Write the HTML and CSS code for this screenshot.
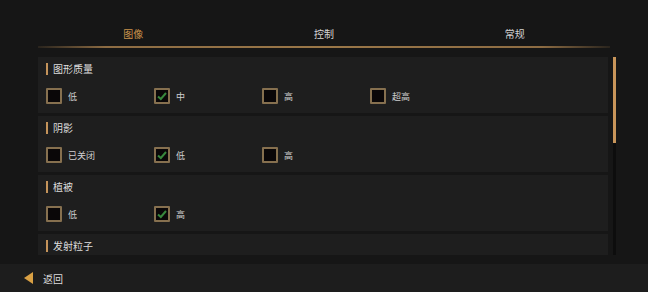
FILE: index.html
```html
<!DOCTYPE html>
<html lang="zh">
<head>
<meta charset="utf-8">
<link rel="stylesheet" href="styles.css">
</head>
<body>
<div class="page">
  <div class="tabs">
    <div class="tab active">图像</div>
    <div class="tab">控制</div>
    <div class="tab">常规</div>
  </div>
  <div class="content">
    <div class="list">
      <div class="section">
        <div class="title">图形质量</div>
        <div class="options">
          <div class="opt"><span class="box"></span><span class="lbl">低</span></div>
          <div class="opt"><span class="box checked"><svg viewBox="0 0 12 12"><path d="M2 6.5 L4.8 9 L10 3" /></svg></span><span class="lbl">中</span></div>
          <div class="opt"><span class="box"></span><span class="lbl">高</span></div>
          <div class="opt"><span class="box"></span><span class="lbl">超高</span></div>
        </div>
      </div>
      <div class="section">
        <div class="title">阴影</div>
        <div class="options">
          <div class="opt"><span class="box"></span><span class="lbl">已关闭</span></div>
          <div class="opt"><span class="box checked"><svg viewBox="0 0 12 12"><path d="M2 6.5 L4.8 9 L10 3" /></svg></span><span class="lbl">低</span></div>
          <div class="opt"><span class="box"></span><span class="lbl">高</span></div>
        </div>
      </div>
      <div class="section">
        <div class="title">植被</div>
        <div class="options">
          <div class="opt"><span class="box"></span><span class="lbl">低</span></div>
          <div class="opt"><span class="box checked"><svg viewBox="0 0 12 12"><path d="M2 6.5 L4.8 9 L10 3" /></svg></span><span class="lbl">高</span></div>
        </div>
      </div>
      <div class="section">
        <div class="title">发射粒子</div>
      </div>
    </div>
    <div class="scrollbar"><div class="thumb"></div></div>
  </div>
  <div class="footer">
    <span class="back-arrow"></span>
    <span class="back-text">返回</span>
  </div>
</div>
</body>
</html>
```
FILE: styles.css
```css
html, body {
  margin: 0;
  padding: 0;
  background: #161616;
}
body {
  width: 648px;
  height: 292px;
  overflow: hidden;
  font-family: "Noto Sans CJK SC", "Noto Sans", sans-serif;
  color: #d6d6d6;
}
.page {
  display: flex;
  flex-direction: column;
  height: 292px;
}
.tabs {
  display: flex;
  margin: 0 38px;
  height: 48px;
  box-sizing: border-box;
  border-bottom: 2px solid transparent;
  border-image: linear-gradient(90deg, rgba(140,108,66,0.15), #8d6c43 12%, #9a7748 50%, #8d6c43 88%, rgba(140,108,66,0.15)) 1;
}
.tab {
  flex: 1;
  display: flex;
  align-items: center;
  justify-content: center;
  padding-top: 27px;
  padding-bottom: 5px;
  font-size: 10px;
  line-height: 14px;
  color: #d4d4d4;
}
.tab.active {
  color: #c8924c;
}
.content {
  display: flex;
  margin: 9px 32px 0 38px;
  height: 198px;
  overflow: hidden;
  gap: 5px;
}
.list {
  flex: 1;
  display: flex;
  flex-direction: column;
  gap: 3px;
}
.section {
  background: #1e1e1e;
  height: 56px;
  flex: none;
  box-sizing: border-box;
  padding: 6px 8px 0 8px;
}
.title {
  display: flex;
  align-items: center;
  height: 12px;
  font-size: 10px;
  line-height: 12px;
  color: #dcdcdc;
}
.title::before {
  content: "";
  width: 2px;
  height: 12px;
  background: #c4935a;
  margin-right: 5px;
}
.options {
  display: flex;
  margin-top: 13px;
}
.opt {
  width: 108px;
  display: flex;
  align-items: center;
  height: 16px;
}
.box {
  width: 16px;
  height: 16px;
  box-sizing: border-box;
  border: 2px solid #86704f;
  border-radius: 1px;
  background: #0a0708;
  display: flex;
  align-items: center;
  justify-content: center;
}
.box svg {
  width: 12px;
  height: 12px;
}
.box svg path {
  fill: none;
  stroke: #37873c;
  stroke-width: 2;
}
.lbl {
  margin-left: 6px;
  font-size: 9px;
  color: #d0d0d0;
}
.scrollbar {
  width: 3px;
  height: 198px;
  background: #0d0d0d;
  flex: none;
}
.thumb {
  height: 86px;
  background: #c8955a;
}
.footer {
  margin-top: auto;
  height: 28px;
  background: #1d1d1d;
  display: flex;
  align-items: center;
  padding-left: 24px;
}
.back-arrow {
  width: 0;
  height: 0;
  border-top: 6px solid transparent;
  border-bottom: 6px solid transparent;
  border-right: 9px solid #d9a044;
}
.back-text {
  margin-left: 10px;
  font-size: 10px;
  color: #dcdcdc;
}
```
